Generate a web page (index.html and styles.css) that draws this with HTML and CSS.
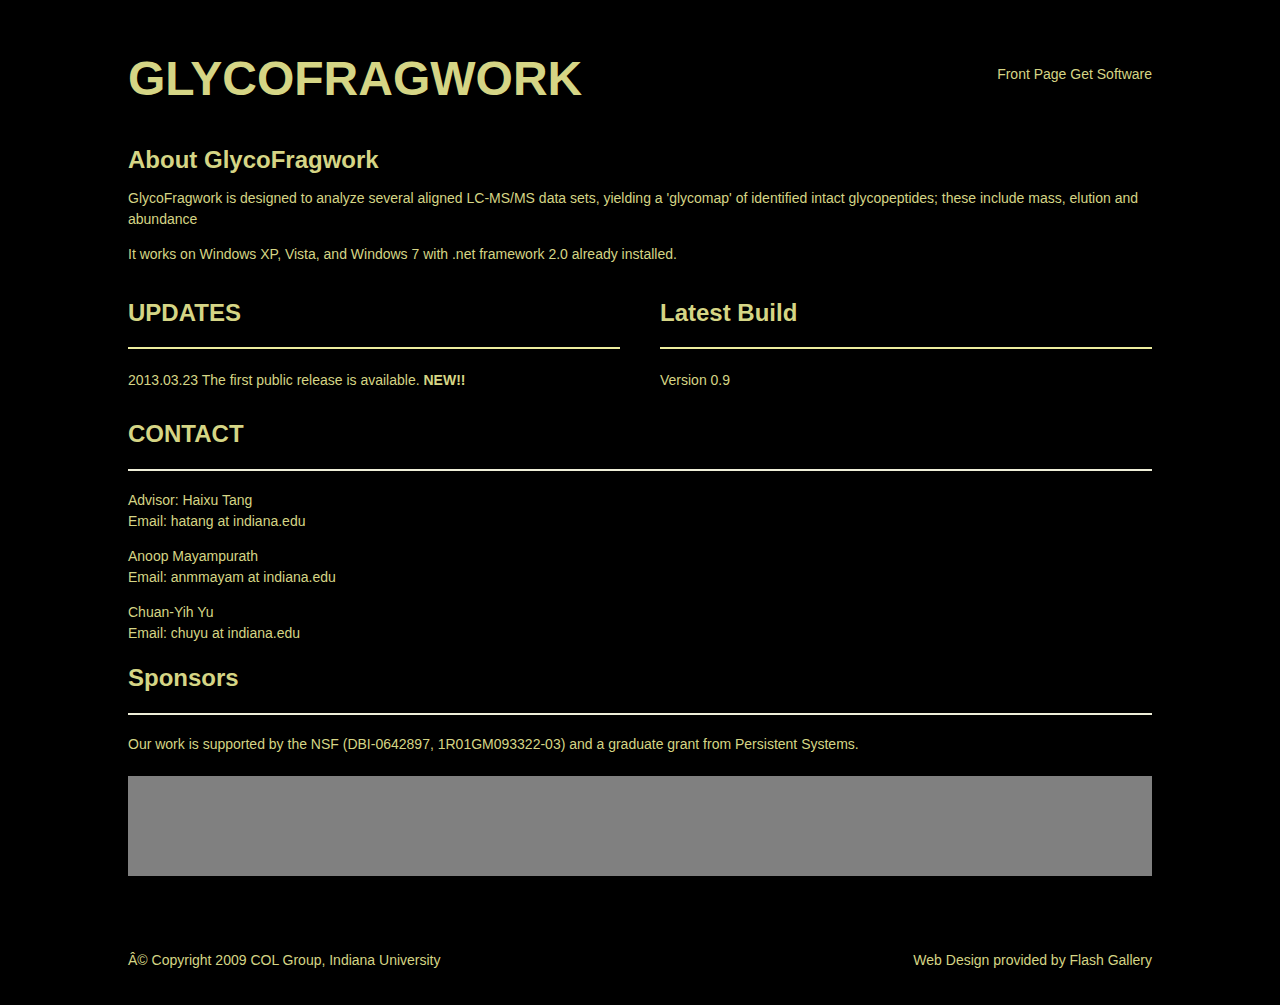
FILE: index.html
```html
<!DOCTYPE html>
<html>
<head>
<meta charset="utf-8">
<title>GlycoFragwork</title>
<link rel="stylesheet" href="styles.css">
</head>
<body>
<div class="page">
  <header class="header">
    <h1 class="logo">GLYCOFRAGWORK</h1>
    <nav class="nav"><a href="#">Front Page</a> <a href="#">Get Software</a></nav>
  </header>

  <section class="about">
    <h2 class="title">About GlycoFragwork</h2>
    <p>GlycoFragwork is designed to analyze several aligned LC-MS/MS data sets, yielding a 'glycomap' of identified intact glycopeptides; these include mass, elution and abundance</p>
    <p>It works on Windows XP, Vista, and Windows 7 with .net framework 2.0 already installed.</p>
  </section>

  <div class="cols">
    <section class="col">
      <h2 class="title">UPDATES</h2>
      <hr class="rule rule-yellow">
      <p>2013.03.23 The first public release is available. <strong>NEW!!</strong></p>
    </section>
    <section class="col">
      <h2 class="title">Latest Build</h2>
      <hr class="rule rule-yellow">
      <p>Version 0.9</p>
    </section>
  </div>

  <section class="contact">
    <h2 class="title">CONTACT</h2>
    <hr class="rule rule-white">
    <p>Advisor: Haixu Tang<br>Email: hatang at indiana.edu</p>
    <p>Anoop Mayampurath<br>Email: anmmayam at indiana.edu</p>
    <p class="last">Chuan-Yih Yu<br>Email: chuyu at indiana.edu</p>
  </section>

  <section class="sponsors">
    <h2 class="title">Sponsors</h2>
    <hr class="rule rule-white">
    <p>Our work is supported by the NSF (DBI-0642897, 1R01GM093322-03) and a graduate grant from Persistent Systems.</p>
    <div class="banner"></div>
  </section>

  <footer class="footer">
    <span>Â© Copyright 2009 COL Group, Indiana University</span>
    <span>Web Design provided by Flash Gallery</span>
  </footer>
</div>
</body>
</html>
```

FILE: styles.css
```css
html, body {
  margin: 0;
  padding: 0;
  background: #000;
}
body {
  color: #d5d585;
  font-family: "Liberation Sans", Arial, Helvetica, sans-serif;
  font-size: 14px;
  line-height: 21px;
}
.page {
  width: 1024px;
  margin: 0 auto;
  padding-top: 51px;
}
a {
  color: #d5d585;
  text-decoration: none;
}
.header {
  display: flex;
  justify-content: space-between;
  align-items: flex-start;
}
.logo {
  margin: 0;
  font-size: 48px;
  line-height: 56px;
  font-weight: bold;
}
.nav {
  font-size: 14px;
  padding-top: 13px;
}
.title {
  margin: 0;
  font-size: 24px;
  line-height: 30px;
  font-weight: bold;
}
p {
  margin: 0 0 14px;
}
.about {
  margin-top: 38px;
}
.about .title {
  margin-bottom: 13px;
}
.cols {
  display: grid;
  grid-template-columns: 1fr 1fr;
  column-gap: 40px;
  margin-top: 33px;
}
.rule {
  border: 0;
  height: 2px;
  margin: 19px 0 21px;
}
.rule-yellow {
  background: #ecec9e;
}
.rule-white {
  background: #eeeed8;
}
.contact {
  margin-top: 14px;
}
.contact .rule {
  margin-top: 20px;
  margin-bottom: 19px;
}
.contact .last {
  margin-bottom: 0;
}
.sponsors {
  margin-top: 19px;
}
.sponsors .rule {
  margin-top: 20px;
  margin-bottom: 19px;
}
.sponsors p {
  margin-bottom: 21px;
}
.banner {
  height: 100px;
  background: #808080;
}
.footer {
  display: flex;
  justify-content: space-between;
  margin-top: 74px;
  padding-bottom: 35px;
}
```
